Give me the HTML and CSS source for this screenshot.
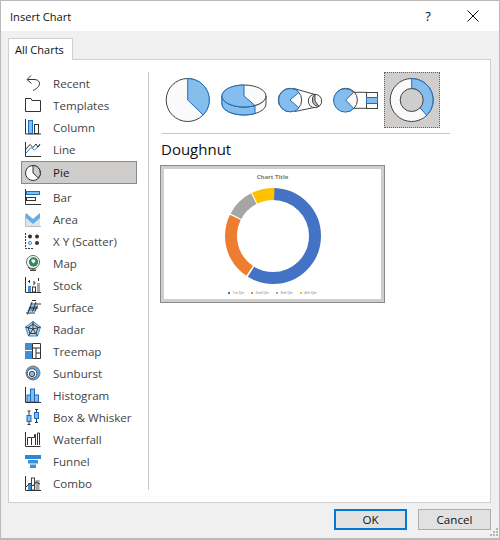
FILE: index.html
```html
<!DOCTYPE html>
<html lang="en">
<head>
<meta charset="utf-8">
<title>Insert Chart</title>
<link rel="stylesheet" href="styles.css">
</head>
<body>
<div class="dialog">
  <header class="titlebar">
    <span class="title">Insert Chart</span>
    <span class="help">?</span>
    <svg class="close" width="12" height="12" viewBox="0 0 12 12"><path d="M.5.5l11 11M11.500.5l-11 11" stroke="#111" fill="none"/></svg>
  </header>
  <div class="body">
    <div class="tabs"><div class="tab">All Charts</div></div>
    <div class="panel">
      <ul class="types">
        <li class="type"><svg class="ico" viewBox="0 0 16 16"><path d="M6 .5L2 4.500 6.500 8.500M2.500 4.500H9C16 4.500 17 11.500 8 15.500" class="k"/></svg>Recent</li>
        <li class="type"><svg class="ico" viewBox="0 0 16 16"><path d="M.5 1.500H6L7 3.500H15.500V14.500H.5Z" class="k"/></svg>Templates</li>
        <li class="type"><svg class="ico" viewBox="0 0 16 16"><rect x="3.500" y="1.500" width="4" height="13" class="b"/><rect x="9.500" y="5.500" width="4" height="9" class="w"/><path d="M.5 0V15H16" class="k"/></svg>Column</li>
        <li class="type"><svg class="ico" viewBox="0 0 16 16"><path d="M.5 1V15.500H16" class="k"/><path d="M1 12L6 6.500 9.500 9 15 4" class="bl"/><path d="M1 8L5 3.500 8 6.500 11 3 13 6 15 3" class="k"/></svg>Line</li>
        <li class="type sel"><svg class="ico" viewBox="0 0 16 16"><circle cx="8" cy="8" r="7.500" fill="#fff" stroke="#333"/><path d="M8 .5V8L13.500 13A7.500 7.500 0 0 0 8 .5Z" fill="#d0cecd" stroke="#333"/></svg>Pie</li>
        <li class="type"><svg class="ico" viewBox="0 0 16 16"><rect x="1.500" y="2.500" width="13" height="3" class="b"/><rect x="1.500" y="8.500" width="9" height="3" class="w"/><path d="M.5 0V15.500H16" class="k"/></svg>Bar</li>
        <li class="type"><svg class="ico" viewBox="0 0 16 16"><path d="M.5 3V15.500H16" stroke="#bbb" fill="none"/><path d="M1 2L8 8 15 2V15H1Z" fill="#d5e6f5"/><path d="M1 2L8 8 15 2V7L8 13 1 7Z" fill="#6aade6"/></svg>Area</li>
        <li class="type"><svg class="ico" viewBox="0 0 16 16"><path d="M.5 0V15.500H8" stroke="#333" stroke-dasharray="2 1" fill="none"/><circle cx="5" cy="3.500" r="2" fill="#333"/><circle cx="12" cy="3.500" r="2" fill="#333"/><circle cx="5" cy="10" r="1.500" fill="#fff" stroke="#2e86d1"/><circle cx="12" cy="10" r="2" fill="#333"/></svg>X Y (Scatter)</li>
        <li class="type"><svg class="ico" viewBox="0 0 16 16"><circle cx="8" cy="7" r="6.500" fill="#fff" stroke="#666"/><circle cx="8.500" cy="7" r="4.700" fill="#2e8b57"/><path d="M6.500 4.500h3l1 2-2 2-2-2z" fill="#fff"/><path d="M3 12l2 2h6M8 14v1.500M5 15.500h6" stroke="#444" fill="none"/></svg>Map</li>
        <li class="type"><svg class="ico" viewBox="0 0 16 16"><path d="M.5 0V15.500H16" class="k"/><rect x="3" y="9" width="3" height="6" fill="#3d8fd6"/><rect x="7.500" y="10" width="3" height="5" class="w"/><rect x="12" y="6" width="3" height="9" fill="#a8a8a8"/><path d="M4.500 3V6M9 4V8M13.500 1V4M3 4.500H4.500M9 6H10.500" class="k"/></svg>Stock</li>
        <li class="type"><svg class="ico" viewBox="0 0 16 16"><path d="M5 6.500H13L10 12.500H2Z" fill="#5ea6e4"/><path d="M7 1.500H11M5.500 5H16M4 9H13M1 14H10M2.500 15.500L7 3M7.500 12.500L11 3M12.500 6.500L10 12.500" class="k"/></svg>Surface</li>
        <li class="type"><svg class="ico" viewBox="0 0 16 16"><path d="M8 .5L15.500 6 12.500 15H3.500L.5 6Z" fill="#bdd7ee" stroke="#2e86d1"/><path d="M8 3L13 6.500 11 12.500H5L3 6.500Z" fill="none" stroke="#333"/><path d="M8 .5V8L15.500 6M8 8L12.500 15M8 8L3.500 15M8 8L.5 6" stroke="#333" fill="none"/></svg>Radar</li>
        <li class="type"><svg class="ico" viewBox="0 0 16 16"><rect x="0" y="0" width="7" height="7" fill="#3d8fd6"/><rect x="0" y="8" width="7" height="8" fill="#3d8fd6"/><path d="M7.500.5H15.500V15.500H7.500ZM7.500 5H15.500M11 5V15.500M11 10H15.500" class="k"/></svg>Treemap</li>
        <li class="type"><svg class="ico" viewBox="0 0 16 16"><circle cx="8" cy="8" r="7" fill="#5ea6e4" stroke="#777"/><circle cx="7" cy="8.500" r="4.800" fill="#fff" stroke="#555"/><circle cx="7" cy="9" r="2.700" fill="#85bded" stroke="#444"/></svg>Sunburst</li>
        <li class="type"><svg class="ico" viewBox="0 0 16 16"><rect x="2" y="8" width="3.500" height="7" class="b"/><rect x="5.500" y="2" width="4" height="13" class="b"/><rect x="9.500" y="8" width="4" height="7" class="b"/><path d="M.5 0V15.500H16" class="k"/></svg>Histogram</li>
        <li class="type"><svg class="ico" viewBox="0 0 16 16"><rect x="2" y="6.500" width="4" height="6" class="b"/><rect x="9.500" y="3.500" width="4" height="6" class="b"/><path d="M4 2V6M4 13V16M11.500 0V3M11.500 10V14M2.500 2H5.500M2.500 15.500H5.500M10 .5H13M10 13.500H13" class="k"/></svg>Box &amp; Whisker</li>
        <li class="type"><svg class="ico" viewBox="0 0 16 16"><path d="M.5 1V15.500H15.500" class="k"/><path d="M2.500 14V6.500H6.500V14M6.500 6.500H9.500V3.500H10.500V14M12.500 14V2H14.500V14" class="k"/><rect x="7" y="7" width="3" height="6" fill="#fff"/></svg>Waterfall</li>
        <li class="type"><svg class="ico" viewBox="0 0 16 16"><rect x="0" y="2" width="16" height="4" fill="#2e86d1"/><rect x="3" y="7" width="10" height="3.500" fill="#3d8fd6"/><rect x="5" y="11.500" width="6" height="3.500" fill="#3d8fd6"/></svg>Funnel</li>
        <li class="type"><svg class="ico" viewBox="0 0 16 16"><rect x="3" y="8" width="3.500" height="7" fill="#3d8fd6"/><rect x="6.500" y="3" width="3" height="12" fill="#fff" stroke="#444"/><rect x="10.500" y="5" width="4" height="10" fill="#a8a8a8"/><path d="M1 12L5 8 8 11 11 7 15 9" class="k"/><path d="M.5 1V15.500H16" class="k"/></svg>Combo</li>
      </ul>
      <div class="main">
        <div class="variants">
          <div class="variant"><svg width="56" height="56" viewBox="0 0 56 56"><circle cx="27.700" cy="28" r="21.500" class="tw"/><path d="M27.700 6.500V28L43.300 43A21.500 21.500 0 0 0 27.700 6.500Z" class="tb"/></svg></div>
          <div class="variant"><svg width="56" height="56" viewBox="0 0 56 56"><path d="M6 24A22 11 0 0 0 50 24V32A22 11 0 0 1 6 32Z" class="tw"/><path d="M6 24A22 11 0 0 0 39 33.500V41.500A22 11 0 0 1 6 32Z" class="tb"/><ellipse cx="28" cy="24" rx="22" ry="11" class="tw"/><path d="M28 24L39 33.500A22 11 0 1 1 28 13Z" class="tb"/></svg></div>
          <div class="variant"><svg width="56" height="56" viewBox="0 0 56 56"><path d="M21.300 16.300L42.300 22.300M23 39.500L43 35.300" class="tl"/><circle cx="18" cy="28" r="11.700" class="tw"/><path d="M27 20.300L18 28 27 36A11.700 11.700 0 1 1 27 20.300Z" class="tb"/><circle cx="43" cy="29" r="6.700" class="tw"/><path d="M43 22.300V29L47 34.400A6.700 6.700 0 0 1 43 22.300Z" fill="#b4b4b4" stroke="#444"/></svg></div>
          <div class="variant"><svg width="56" height="56" viewBox="0 0 56 56"><path d="M25.700 20.300H38.700M25.700 36.300H38.700" class="tl"/><circle cx="17.700" cy="28" r="11.700" class="tw"/><path d="M25.700 20.300L17.700 28 25.700 36.500A11.700 11.700 0 1 1 25.700 20.300Z" class="tb"/><rect x="38.500" y="20.500" width="11" height="16" class="tw"/><rect x="38.500" y="25.500" width="11" height="6" class="tb"/></svg></div>
          <div class="variant on"><svg width="54" height="54" viewBox="1 1 54 54"><circle cx="27.700" cy="28" r="21.500" class="tw"/><path d="M27.700 6.500A21.500 21.500 0 0 1 42.700 43.400L35.800 35.500A11.500 11.500 0 0 0 27.700 16.500Z" class="tb"/><circle cx="27.700" cy="28" r="11.500" class="tin"/></svg></div>
        </div>
        <h2 class="name">Doughnut</h2>
        <div class="preview">
          <div class="chart-title">Chart Title</div>
          <svg class="ring" width="100" height="100" viewBox="0 0 100 100">
            <g fill="none" stroke-width="12" transform="rotate(-90 50 50)">
              <circle cx="50" cy="50" r="42" pathLength="100" stroke="#4472c4" stroke-dasharray="58.800 41.200"/>
              <circle cx="50" cy="50" r="42" pathLength="100" stroke="#ed7d31" stroke-dasharray="22.900 77.100" stroke-dashoffset="-59.400"/>
              <circle cx="50" cy="50" r="42" pathLength="100" stroke="#a5a5a5" stroke-dasharray="9.600 90.400" stroke-dashoffset="-82.800"/>
              <circle cx="50" cy="50" r="42" pathLength="100" stroke="#ffc000" stroke-dasharray="7.700 92.300" stroke-dashoffset="-92.800"/>
            </g>
          </svg>
          <div class="legend">
            <span class="key"><i class="sw s1"></i>1st Qtr</span>
            <span class="key"><i class="sw s2"></i>2nd Qtr</span>
            <span class="key"><i class="sw s3"></i>3rd Qtr</span>
            <span class="key"><i class="sw s4"></i>4th Qtr</span>
          </div>
        </div>
      </div>
    </div>
    <footer class="actions">
      <button class="btn default">OK</button>
      <button class="btn">Cancel</button>
    </footer>
  </div>
  <svg class="grip" width="8" height="8" viewBox="0 0 8 8" fill="#b5b5b5"><rect x="6" y="0" width="2" height="2"/><rect x="3" y="3" width="2" height="2"/><rect x="6" y="3" width="2" height="2"/><rect x="0" y="6" width="2" height="2"/><rect x="3" y="6" width="2" height="2"/><rect x="6" y="6" width="2" height="2"/></svg>
</div>
</body>
</html>
```

FILE: styles.css
```css
* { box-sizing: border-box; }
html, body { margin: 0; padding: 0; }
body { width: 500px; height: 540px; overflow: hidden; font-family: "Open Sans", "Noto Sans", sans-serif; }
.dialog { position: relative; width: 500px; height: 540px; display: flex; flex-direction: column; background: #f0f0f0; border: 1px solid #b9b9b9; border-bottom-width: 2px; }
.titlebar { height: 30px; flex: none; background: #fff; display: flex; align-items: center; padding-left: 9px; font-size: 11.100px; color: #111; }
.title { flex: 1; }
.help { width: 12px; margin-right: 33px; font-size: 13px; text-align: center; }
.close { margin-right: 20px; }
.body { flex: 1; display: flex; flex-direction: column; padding: 7px 8px 0 7px; min-height: 0; }
.tabs { display: flex; height: 21px; flex: none; }
.tab { width: 65px; height: 22px; background: #fff; border: 1px solid #d0d0d0; border-bottom: 0; font-size: 11px; line-height: 21px; padding-left: 6px; color: #111; position: relative; z-index: 1; }
.panel { height: 444px; flex: none; background: #fff; border: 1px solid #d0d0d0; display: flex; padding: 12px 0 0 12px; }
.types { list-style: none; margin: 0; padding: 0; width: 128px; height: 418px; border-right: 1px solid #c8c8c8; flex: none; }
.type { width: 116px; height: 22px; display: flex; align-items: center; padding-left: 4px; font-size: 11.600px; color: #444; }
.ico { width: 16px; height: 16px; margin-right: 12px; flex: none; }
.sel { height: 23px; margin: 1px 0 2px; background: #d0cecd; border: 1px solid #8a8a8a; padding-left: 3px; color: #222; }
.k { fill: none; stroke: #333; }
.bl { fill: none; stroke: #2e86d1; }
.b { fill: #85bded; stroke: #1a6fc0; }
.w { fill: #fff; stroke: #333; }
.main { flex: 1; padding-left: 11px; min-width: 0; }
.variants { display: flex; height: 62px; width: 288px; border-bottom: 1px solid #c8c8c8; margin-left: 2px; }
.variant { width: 56px; height: 56px; flex: none; }
.variants .variant:first-child { margin-left: -2px; }
.on { background: #d0cecd; border: 1px dotted #666; }
.tw { fill: #fafafa; stroke: #444; }
.tb { fill: #85bded; stroke: #1a6fc0; }
.tl { fill: none; stroke: #444; }
.tin { stroke: #444; fill: #d0cecd; }
.variant svg { display: block; }
.name { margin: 4px 0 0 1px; font-size: 15px; line-height: 22px; font-weight: 400; color: #111; }
.preview { margin-top: 5px; width: 225px; height: 138px; background: #fff; border: 1px solid #8a8a8a; outline: 3px solid #d0cecd; outline-offset: -4px; display: flex; flex-direction: column; align-items: center; padding-top: 7px; }
.chart-title { font-size: 6px; line-height: 9px; font-weight: 700; color: #777; }
.ring { display: block; margin-top: 4px; }
.legend { display: flex; gap: 7px; font-size: 3.800px; line-height: 6px; color: #777; margin-top: 4px; }
.key { display: flex; align-items: center; gap: 2px; }
.sw { width: 2px; height: 2px; display: block; }
.s1 { background: #4472c4; }
.s2 { background: #ed7d31; }
.s3 { background: #a5a5a5; }
.s4 { background: #ffc000; }
.actions { display: flex; justify-content: flex-end; gap: 11px; padding-top: 6px; }
.btn { width: 73px; height: 21px; padding: 0; background: #e1e1e1; border: 1px solid #adadad; font-family: inherit; font-size: 11.600px; line-height: 17px; color: #111; }
.default { border: 2px solid #0078d7; }
.grip { position: absolute; right: 1px; bottom: 2px; }
```
